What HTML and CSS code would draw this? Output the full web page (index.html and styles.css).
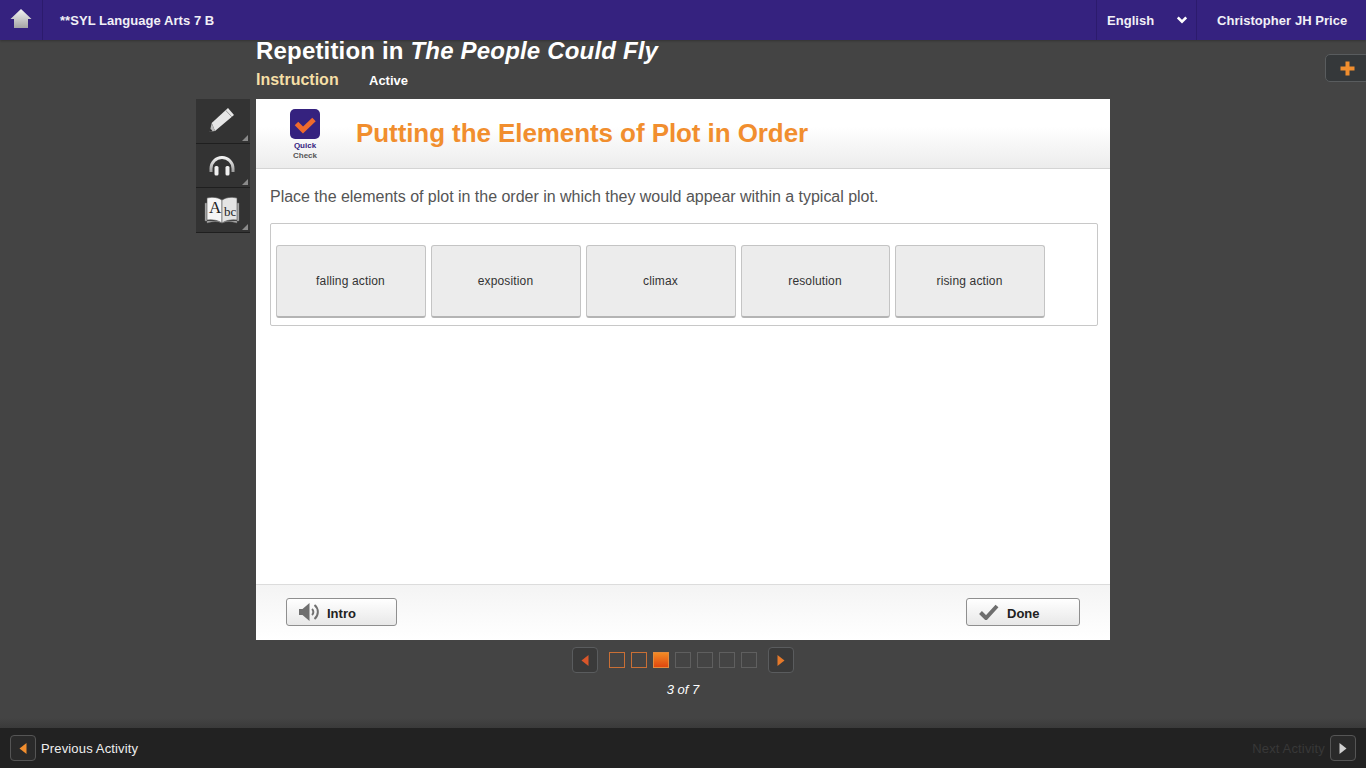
FILE: index.html
```html
<!DOCTYPE html>
<html lang="en">

<head>
    <meta charset="UTF-8">
    <title>Repetition in The People Could Fly</title>
    <link rel="stylesheet" href="styles.css">
</head>

<body>
    <!-- Top bar -->
    <header class="topbar">
        <a class="home-link">
            <svg width="22" height="20" viewBox="0 0 22 20">
                <defs>
                    <linearGradient id="homeFill" x1="0" y1="0" x2="0" y2="1">
                        <stop offset="0" stop-color="#f4f4f4" />
                        <stop offset="1" stop-color="#a5a5a5" />
                    </linearGradient>
                </defs>
                <path d="M11 0 L21.5 10 L18 10 L18 19 L4 19 L4 10 L.5 10 Z" fill="url(#homeFill)" />
            </svg>
        </a>
        <div class="course-name">**SYL Language Arts 7 B</div>
        <div class="lang-select">
            <span>English</span>
            <svg width="10" height="8" viewBox="0 0 10 8">
                <path d="M.8 1.4 L5 5.6 L9.200 1.4" fill="none" stroke="#fff" stroke-width="2.600" />
            </svg>
        </div>
        <div class="user-name">Christopher JH Price</div>
    </header>

    <a class="plus-tab">
        <svg width="15" height="15" viewBox="0 0 15 15">
            <path d="M5.500 0.500 H9.500 V5.500 H14.500 V9.500 H9.500 V14.500 H5.500 V9.500 H0.500 V5.500 H5.500 Z" fill="#f18e2e" />
        </svg>
    </a>

    <main class="stage">
        <div class="lesson-head">
            <h1>Repetition in <em>The People Could Fly</em></h1>
            <div class="lesson-sub">
                <span class="lesson-type">Instruction</span>
                <span class="lesson-state">Active</span>
            </div>
        </div>

        <!-- Side tools -->
        <div class="tools">
            <div class="tool">
                <svg width="28" height="28" viewBox="0 0 28 28">
                    <path d="M20 1 L26 8 L7 24 L3.700 16 Z" fill="#e6e6e6" />
                    <path d="M3.700 16 L7 24 L1.700 24.700 Z" fill="#bdbdbd" />
                    <path d="M17.500 3.200 L23.800 9.800" stroke="#9a9a9a" stroke-width="1" />
                    <path d="M1.700 24.700 L2.500 21.500 L4.500 24.300 Z" fill="#222" />
                </svg>
            </div>
            <div class="tool">
                <svg width="26" height="28" viewBox="0 0 26 28">
                    <defs>
                        <linearGradient id="phoneFill" x1="0" y1="0" x2="0" y2="1">
                            <stop offset="0" stop-color="#fafafa" />
                            <stop offset="1" stop-color="#9c9c9c" />
                        </linearGradient>
                    </defs>
                    <path d="M.5 21 V17.500 A12.500 12.500 0 0 1 25.500 17.500 V21 H22.500 V17.500 A9.500 9.500 0 0 0 3.500 17.500 V21 Z" fill="url(#phoneFill)" />
                    <rect x="5.500" y="15" width="4" height="9.500" rx="1.500" fill="#f0f0f0" />
                    <rect x="16.500" y="15" width="4" height="9.500" rx="1.500" fill="#f0f0f0" />
                </svg>
            </div>
            <div class="tool">
                <svg width="36" height="28" viewBox="0 0 36 28">
                    <path d="M1 25 V7 H3 V27 Q12 24 18 27 Q24 24 33 27 V7 H35 V25 Z" fill="#bcbcbc" stroke="#666" stroke-width=".5" />
                    <path d="M3 24 V2 Q12 0 18 4 V27 Q12 23 3 24 Z" fill="#f6f6f6" stroke="#555" stroke-width=".6" />
                    <path d="M33 24 V2 Q24 0 18 4 V27 Q24 23 33 24 Z" fill="#e4e4e4" stroke="#555" stroke-width=".6" />
                    <text x="5" y="17" class="book-big">A</text>
                    <text x="20" y="20" class="book-small">bc</text>
                </svg>
            </div>
        </div>

        <!-- Activity card -->
        <section class="card">
            <div class="card-head">
                <div class="quick-check">
                    <svg width="30" height="30" viewBox="0 0 30 30">
                        <rect width="30" height="30" rx="5" fill="#35227f" />
                        <path d="M6.500 14.500 L13 21 L24 10.500" fill="none" stroke="#ef6a2c" stroke-width="5" />
                    </svg>
                    <div class="qc-label"><b>Quick</b><span>Check</span></div>
                </div>
                <h2>Putting the Elements of Plot in Order</h2>
            </div>

            <div class="card-body">
                <p class="prompt">Place the elements of plot in the order in which they would appear within a typical plot.</p>
                <div class="drag-tray">
                    <div class="drag-item">falling action</div>
                    <div class="drag-item">exposition</div>
                    <div class="drag-item">climax</div>
                    <div class="drag-item item-narrow">resolution</div>
                    <div class="drag-item">rising action</div>
                </div>
            </div>

            <div class="card-foot">
                <button class="btn btn-intro">
                    <svg width="24" height="20" viewBox="0 0 24 20">
                        <path d="M1 7 H4.500 L11.500 1 V19 L4.500 13 H1 Z" fill="#707070" />
                        <path d="M14 7 A4 4 0 0 1 14 13" fill="none" stroke="#707070" stroke-width="2" />
                        <path d="M16.500 3 A9 9 0 0 1 16.500 17" fill="none" stroke="#707070" stroke-width="2" />
                    </svg>
                    <span>Intro</span>
                </button>
                <button class="btn btn-done">
                    <svg width="20" height="16" viewBox="0 0 20 16">
                        <path d="M1.500 8.500 L7 14 L18 2" fill="none" stroke="#6e6e6e" stroke-width="4" />
                    </svg>
                    <span>Done</span>
                </button>
            </div>
        </section>

        <!-- Pager -->
        <div class="pager">
            <div class="pager-row">
                <a class="arrow-btn pager-prev">
                    <svg width="8" height="11" viewBox="0 0 8 11"><path d="M7.500 0 V11 L0.500 5.500 Z" fill="#d9562a" /></svg>
                </a>
                <div class="page-boxes">
                    <span class="page-box seen"></span>
                    <span class="page-box seen"></span>
                    <span class="page-box current"></span>
                    <span class="page-box"></span>
                    <span class="page-box"></span>
                    <span class="page-box"></span>
                    <span class="page-box"></span>
                </div>
                <a class="arrow-btn pager-next">
                    <svg width="8" height="11" viewBox="0 0 8 11"><path d="M0.500 0 V11 L7.500 5.500 Z" fill="#e5792a" /></svg>
                </a>
            </div>
            <div class="page-count">3 of 7</div>
        </div>
    </main>

    <!-- Bottom bar -->
    <footer class="bottombar">
        <div class="activity-link">
            <a class="arrow-btn small">
                <svg width="8" height="11" viewBox="0 0 8 11"><path d="M7.500 0 V11 L0.500 5.500 Z" fill="#f18e2e" /></svg>
            </a>
            <span>Previous Activity</span>
        </div>
        <div class="activity-link disabled">
            <span>Next Activity</span>
            <a class="arrow-btn small">
                <svg width="8" height="11" viewBox="0 0 8 11"><path d="M0.500 0 V11 L7.500 5.500 Z" fill="#d0d0d0" /></svg>
            </a>
        </div>
    </footer>
</body>

</html>
```

FILE: styles.css
```css
* {
    box-sizing: border-box;
}

html,
body {
    height: 100%;
}

body {
    margin: 0;
    height: 768px;
    overflow: hidden;
    display: flex;
    flex-direction: column;
    position: relative;
    background: #444;
    color: #fff;
    font-family: 'Liberation Sans', Arial, sans-serif;
}

/* top bar */
.topbar {
    height: 40px;
    flex: none;
    display: flex;
    align-items: center;
    background: #35227f;
    box-shadow: 0 1px 2px rgba(0, 0, 0, 0.25);
    font-size: 13px;
    font-weight: bold;
    letter-spacing: 0.05px;
    color: #f1f0f6;
}

.home-link {
    width: 43px;
    height: 40px;
    flex: none;
    display: flex;
    align-items: center;
    justify-content: center;
    padding: 0 1px 2px 0;
    border-right: 1px solid #2c1b6d;
}

.course-name {
    flex: 1;
    padding-left: 17px;
}

.lang-select {
    width: 101px;
    height: 40px;
    display: flex;
    align-items: center;
    justify-content: space-between;
    padding: 0 9px 0 10px;
    border-left: 1px solid #2c1b6d;
    border-right: 1px solid #2c1b6d;
}

.user-name {
    width: 169px;
    padding-left: 20px;
}

.plus-tab {
    position: absolute;
    top: 54px;
    right: -4px;
    width: 45px;
    height: 28px;
    display: flex;
    align-items: center;
    padding-left: 14px;
    background: #35383a;
    border: 1px solid #595c5e;
    border-radius: 5px;
}

/* main column */
.stage {
    flex: 1;
    display: grid;
    grid-template-columns: 1fr 854px 1fr;
    grid-template-rows: 59px 541px auto;
    align-content: start;
}

.lesson-head {
    grid-column: 2;
    grid-row: 1;
}

.lesson-head h1 {
    margin: 0;
    font-size: 24px;
    line-height: 22px;
    font-weight: bold;
    letter-spacing: 0.18px;
}

.lesson-sub {
    display: flex;
    align-items: baseline;
    margin-top: 9px;
}

.lesson-type {
    width: 113px;
    font-size: 16px;
    font-weight: bold;
    color: #f5dfa6;
}

.lesson-state {
    font-size: 13px;
    font-weight: bold;
}

.tools {
    grid-column: 1;
    grid-row: 2;
    justify-self: end;
    width: 54px;
    margin-right: 6px;
}

.tool {
    height: 44.67px;
    display: flex;
    align-items: center;
    justify-content: center;
    padding-right: 2px;
    position: relative;
    background: #333;
    border-bottom: 1px solid #1f1f1f;
}

.tool::after {
    content: "";
    position: absolute;
    right: 2px;
    bottom: 2px;
    border-style: solid;
    border-width: 0 0 6px 6px;
    border-color: transparent transparent #8a8a8a transparent;
}

.book-big {
    font-family: 'Liberation Serif', serif;
    font-size: 17px;
    fill: #222;
}

.book-small {
    font-family: 'Liberation Serif', serif;
    font-size: 13px;
    fill: #222;
}

/* card */
.card {
    grid-column: 2;
    grid-row: 2;
    display: flex;
    flex-direction: column;
    background: #fff;
}

.card-head {
    height: 70px;
    flex: none;
    display: flex;
    align-items: center;
    background: linear-gradient(#fff 40%, #ececec);
    border-bottom: 1px solid #d4d4d4;
}

.quick-check {
    width: 100px;
    display: flex;
    flex-direction: column;
    align-items: center;
    padding: 3px 2px 0 0;
}

.qc-label {
    display: flex;
    flex-direction: column;
    align-items: center;
    margin-top: 2px;
    font-size: 8px;
    line-height: 10px;
    font-weight: bold;
}

.qc-label b {
    color: #35227f;
}

.qc-label span {
    color: #555;
}

.card-head h2 {
    margin: 0;
    font-size: 26px;
    font-weight: bold;
    letter-spacing: -0.08px;
    color: #f18e2e;
}

.card-body {
    flex: 1;
    padding: 19px 12px 0 14px;
}

.prompt {
    margin: 0 0 17px;
    font-size: 16px;
    line-height: 18px;
    letter-spacing: -0.02px;
    color: #555;
}

.drag-tray {
    height: 103px;
    display: flex;
    gap: 5px;
    padding: 21px 5px 0;
    border: 1px solid #c8c8c8;
    border-radius: 2px;
}

.drag-item {
    width: 150px;
    height: 73px;
    display: flex;
    align-items: center;
    justify-content: center;
    padding-right: 1px;
    background: #ececec;
    border: 1px solid #c4c4c4;
    border-bottom: 2px solid #b4b4b4;
    border-radius: 3px;
    font-size: 12px;
    letter-spacing: 0.15px;
    color: #333;
}

.item-narrow {
    width: 149px;
}

.card-foot {
    height: 56px;
    flex: none;
    display: flex;
    align-items: flex-start;
    justify-content: space-between;
    padding: 13px 30px 0;
    background: linear-gradient(#f4f4f4, #fff);
    border-top: 1px solid #dcdcdc;
}

.btn {
    height: 28px;
    display: flex;
    align-items: center;
    padding: 0;
    background: linear-gradient(#fff, #e8e8e8);
    border: 1px solid #8f8f8f;
    border-radius: 3px;
    font-family: inherit;
    font-size: 13px;
    font-weight: bold;
    color: #222;
}

.btn span {
    margin-top: 2px;
}

.btn-intro {
    width: 111px;
    gap: 5px;
    padding-left: 11px;
}

.btn-done {
    width: 114px;
    gap: 8px;
    padding-left: 12px;
}

/* pager */
.pager {
    grid-column: 2;
    grid-row: 3;
    display: flex;
    flex-direction: column;
    align-items: center;
}

.pager-row {
    display: flex;
    align-items: center;
    margin-top: 7px;
}

.arrow-btn {
    width: 26px;
    height: 26px;
    display: flex;
    align-items: center;
    justify-content: center;
    background: #3a3a3a;
    border: 1px solid #5a5c5e;
    border-radius: 4px;
}

.page-boxes {
    display: flex;
    gap: 6px;
    margin: 0 11px;
}

.page-box {
    width: 16px;
    height: 16px;
    border: 1px solid #5f5f5f;
}

.page-box.seen {
    border-color: #c96f35;
}

.page-box.current {
    border-color: #e58a3a;
    background: linear-gradient(#f28a24, #e0470f);
}

.page-count {
    margin-top: 9px;
    font-size: 13px;
    line-height: 15px;
    font-style: italic;
}

/* bottom bar */
.bottombar {
    height: 40px;
    flex: none;
    display: flex;
    align-items: center;
    justify-content: space-between;
    padding: 0 10px;
    position: relative;
    background: #222;
    font-size: 13px;
    letter-spacing: 0.15px;
    color: #eee;
}

.bottombar .arrow-btn {
    background: #2a2a2a;
    border-color: #555;
}

.bottombar span {
    margin-top: 1px;
}

.bottombar::before {
    content: "";
    position: absolute;
    left: 0;
    right: 0;
    top: -10px;
    height: 10px;
    background: linear-gradient(#444, #3a3a3a);
}

.activity-link {
    display: flex;
    align-items: center;
    gap: 5px;
}

.activity-link.disabled {
    color: #383838;
}
```
